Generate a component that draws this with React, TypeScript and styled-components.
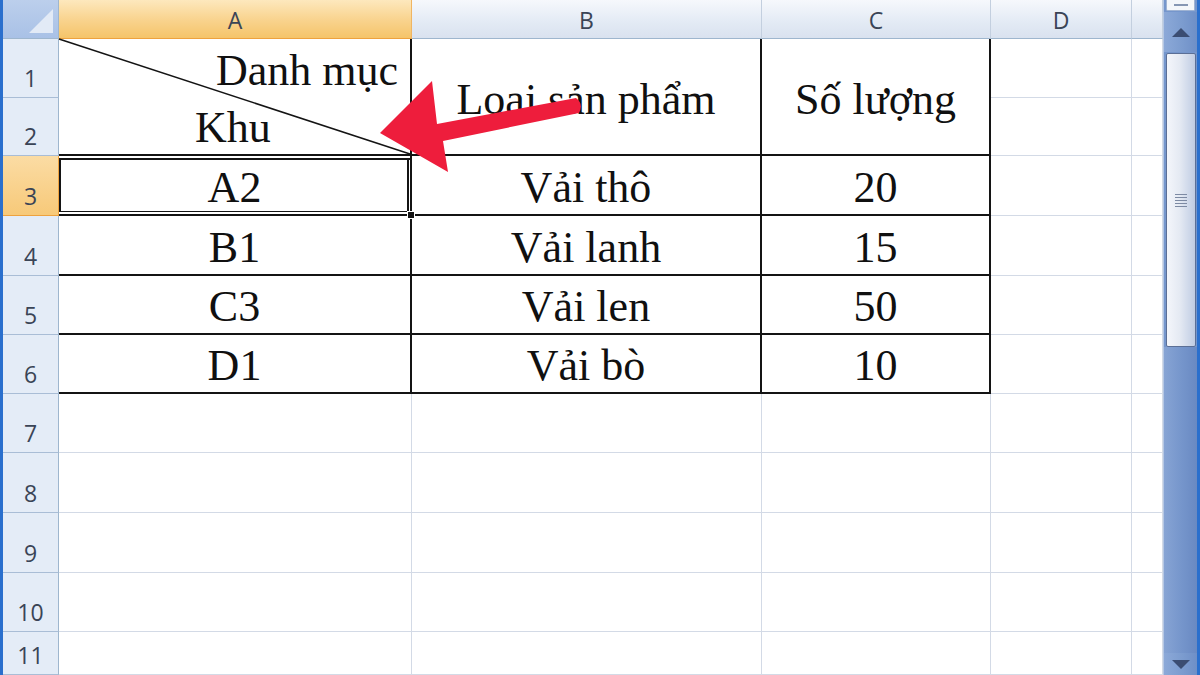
import React from 'react';
import styled, { createGlobalStyle, css } from 'styled-components';

const Global = createGlobalStyle`
  html, body { margin: 0; padding: 0; width: 1200px; height: 675px; overflow: hidden; background: #ffffff; }
  #root { width: 1200px; height: 675px; }
`;

const Window = styled.div`
  position: relative;
  display: grid;
  grid-template-columns: 3px 1160px 34px 3px;
  width: 1200px;
  height: 675px;
  overflow: hidden;
  background: #ffffff;
`;

const EdgeStripe = styled.div`
  background-color: #2a6fcd;
`;

const Sheet = styled.div`
  display: grid;
  grid-template-columns: 56px 353px 350px 229px 141px 31px;
  grid-template-rows: 39px 59px 58px 60px 60px 59px 59px 59px 60px 60px 59px 43px;
  overflow: hidden;
`;

const headerFont = css`
  font-family: 'Open Sans', 'Liberation Sans', sans-serif;
  font-size: 23px;
  line-height: 1;
  color: #3a4456;
`;

const Corner = styled.div`
  background: linear-gradient(#bccfec, #a9c1e6);
  border-right: 1px solid #9eb6ce;
  border-bottom: 1px solid #9eb6ce;
  display: flex;
  align-items: flex-end;
  justify-content: flex-end;
  padding: 0 5px 5px 0;
  box-sizing: border-box;
`;

const ColHeader = styled.div<{ $active?: boolean }>`
  ${headerFont};
  display: flex;
  align-items: center;
  justify-content: center;
  padding-top: 2px;
  box-sizing: border-box;
  background: linear-gradient(#f6f8fc, #e4ebf5 55%, #d9e2ef);
  border-right: 1px solid #c3cfdf;
  border-bottom: 1px solid #9eb6ce;
  ${(p) =>
    p.$active &&
    css`
      background: linear-gradient(#fde8bd, #f9d490 50%, #f5c46a);
      border-right-color: #f0b562;
      border-bottom: 1px solid #eea23e;
    `}
`;

const RowHeader = styled.div<{ $active?: boolean }>`
  ${headerFont};
  display: flex;
  align-items: flex-end;
  justify-content: center;
  padding-bottom: 7px;
  box-sizing: border-box;
  background: #e4ecf7;
  border-right: 1px solid #9eb6ce;
  border-bottom: 1px solid #a9bdd6;
  ${(p) =>
    p.$active &&
    css`
      background: linear-gradient(#fbdca4, #f7c979);
      border-right-color: #eea23e;
      border-bottom-color: #eea23e;
    `}
`;

const Cell = styled.div<{ $table?: boolean; $span?: number; $v?: 'top' | 'center' | 'bottom'; $selected?: boolean }>`
  position: relative;
  grid-row: span ${(p) => p.$span ?? 1};
  display: flex;
  justify-content: center;
  align-items: ${(p) => (p.$v === 'center' ? 'center' : p.$v === 'top' ? 'flex-start' : 'flex-end')};
  box-sizing: border-box;
  padding-bottom: ${(p) => (p.$v === 'bottom' || !p.$v ? '1px' : '0')};
  padding-top: ${(p) => (p.$v === 'center' ? '6px' : '0')};
  border-right: 1px solid #d3dae6;
  border-bottom: 1px solid #d3dae6;
  font-family: 'Liberation Serif', 'Times New Roman', serif;
  font-size: 44px;
  color: #101010;
  white-space: nowrap;
  ${(p) =>
    p.$table &&
    css`
      border-right: 2px solid #141414;
      border-bottom: 2px solid #141414;
    `}
  ${(p) =>
    p.$selected &&
    css`
      box-shadow: inset 0 2px 0 0 #ffffff, inset 0 4px 0 0 #141414, inset 0 -2px 0 0 #ffffff, inset 0 -3px 0 0 #141414,
        inset -1px 0 0 0 #ffffff, inset -3px 0 0 0 #141414, inset 2px 0 0 0 #141414;
    `}
`;

const DiagonalCell = styled(Cell)`
  flex-direction: column;
  justify-content: space-between;
  align-items: stretch;
  padding: 10px 0 4px 0;
`;

const DiagLine = styled.span<{ $align: 'right' | 'left' }>`
  position: relative;
  z-index: 1;
  display: block;
  line-height: 44px;
  text-align: ${(p) => p.$align};
  padding-right: ${(p) => (p.$align === 'right' ? '12px' : '0')};
  padding-left: ${(p) => (p.$align === 'left' ? '136px' : '0')};
`;

const DiagonalSvg = styled.svg`
  position: absolute;
  left: 0;
  top: 0;
  width: 100%;
  height: 100%;
  overflow: visible;
`;

const FillHandle = styled.span`
  position: absolute;
  right: -5px;
  bottom: -5px;
  width: 6px;
  height: 6px;
  background: #141414;
  border: 1px solid #ffffff;
  z-index: 3;
`;

const ScrollBar = styled.div`
  display: grid;
  grid-template-rows: 12px 40px 295px 1fr 22px;
  height: 675px;
  background-color: #7596cc;
  border-left: 1px solid #b5c7e3;
  box-sizing: border-box;
`;

const SplitBox = styled.div`
  margin: 0 2px 1px;
  box-sizing: border-box;
  background-color: #f3f6fa;
  border: 1px solid #9fb3d3;
  border-top: none;
  border-radius: 0 0 2px 2px;
  display: flex;
  align-items: center;
  justify-content: center;
`;

const SplitDash = styled.span`
  width: 14px;
  height: 2px;
  background-color: #8596b3;
`;

const ArrowButton = styled.div`
  display: flex;
  align-items: center;
  justify-content: center;
  background-color: #7e9ed1;
  background-image: linear-gradient(to right, #8ca9d8, #7c9ccf 55%, #6e8fc7);
`;

const Thumb = styled.div`
  margin: 1px 1px 0 2px;
  box-sizing: border-box;
  border: 1px solid #5b6f96;
  border-radius: 2px;
  background-color: #e2e8f2;
  background-image: linear-gradient(to right, #f4f6fb, #e5eaf3 45%, #cdd7e9 80%, #bfcbe2);
  display: flex;
  align-items: center;
  justify-content: center;
`;

const Grip = styled.div`
  display: flex;
  flex-direction: column;
  gap: 2px;
`;

const GripLine = styled.span`
  display: block;
  width: 12px;
  height: 1px;
  background-color: #7d8aa3;
`;

const Track = styled.div`
  background-color: #7191c9;
  background-image: linear-gradient(to right, #87a4d4, #7595cb 55%, #6989c2);
`;

const Overlay = styled.svg`
  position: absolute;
  left: 0;
  top: 0;
  width: 1200px;
  height: 675px;
  pointer-events: none;
  z-index: 10;
`;

const cols = ['A', 'B', 'C', 'D', ''];

const data: [string, string, string][] = [
  ['A2', 'Vải thô', '20'],
  ['B1', 'Vải lanh', '15'],
  ['C3', 'Vải len', '50'],
  ['D1', 'Vải bò', '10'],
];

export default function App() {
  return (
    <>
      <Global />
      <Window>
        <EdgeStripe />
        <Sheet>
          <Corner>
            <svg width="24" height="24" viewBox="0 0 24 24">
              <polygon points="0,24 24,24 24,0" fill="#e2eaf6" />
            </svg>
          </Corner>
          {cols.map((c, i) => (
            <ColHeader key={i} $active={c === 'A'}>
              {c}
            </ColHeader>
          ))}

          <RowHeader>1</RowHeader>
          <DiagonalCell $table $span={2} $v="top">
            <DiagonalSvg viewBox="0 0 100 100" preserveAspectRatio="none">
              <line x1="0" y1="0" x2="100" y2="100" stroke="#141414" strokeWidth="1.5" vectorEffect="non-scaling-stroke" />
            </DiagonalSvg>
            <DiagLine $align="right">Danh mục</DiagLine>
            <DiagLine $align="left">Khu</DiagLine>
          </DiagonalCell>
          <Cell $table $span={2} $v="center">
            Loai sản phẩm
          </Cell>
          <Cell $table $span={2} $v="center">
            Số lượng
          </Cell>
          <Cell />
          <Cell />

          <RowHeader>2</RowHeader>
          <Cell />
          <Cell />

          {data.map((row, r) => (
            <React.Fragment key={r}>
              <RowHeader $active={r === 0}>{r + 3}</RowHeader>
              <Cell $table $selected={r === 0}>
                {row[0]}
                {r === 0 && <FillHandle />}
              </Cell>
              <Cell $table>{row[1]}</Cell>
              <Cell $table>{row[2]}</Cell>
              <Cell />
              <Cell />
            </React.Fragment>
          ))}

          {[7, 8, 9, 10, 11].map((n) => (
            <React.Fragment key={n}>
              <RowHeader>{n}</RowHeader>
              <Cell />
              <Cell />
              <Cell />
              <Cell />
              <Cell />
            </React.Fragment>
          ))}
        </Sheet>
        <ScrollBar>
          <SplitBox>
            <SplitDash />
          </SplitBox>
          <ArrowButton>
            <svg width="18" height="9" viewBox="0 0 18 9">
              <polygon points="0,9 18,9 9,0" fill="#3b4d72" />
            </svg>
          </ArrowButton>
          <Thumb>
            <Grip>
              <GripLine />
              <GripLine />
              <GripLine />
              <GripLine />
              <GripLine />
            </Grip>
          </Thumb>
          <Track />
          <ArrowButton>
            <svg width="18" height="9" viewBox="0 0 18 9">
              <polygon points="0,0 18,0 9,9" fill="#3b4d72" />
            </svg>
          </ArrowButton>
        </ScrollBar>
        <EdgeStripe />
        <Overlay viewBox="0 0 1200 675">
          <path
            d="M380,133 L432,81 L437,124 L576,98 Q584,104 579,113 L443,141 L448,172 Z"
            fill="#ee1d3c"
          />
        </Overlay>
      </Window>
    </>
  );
}
